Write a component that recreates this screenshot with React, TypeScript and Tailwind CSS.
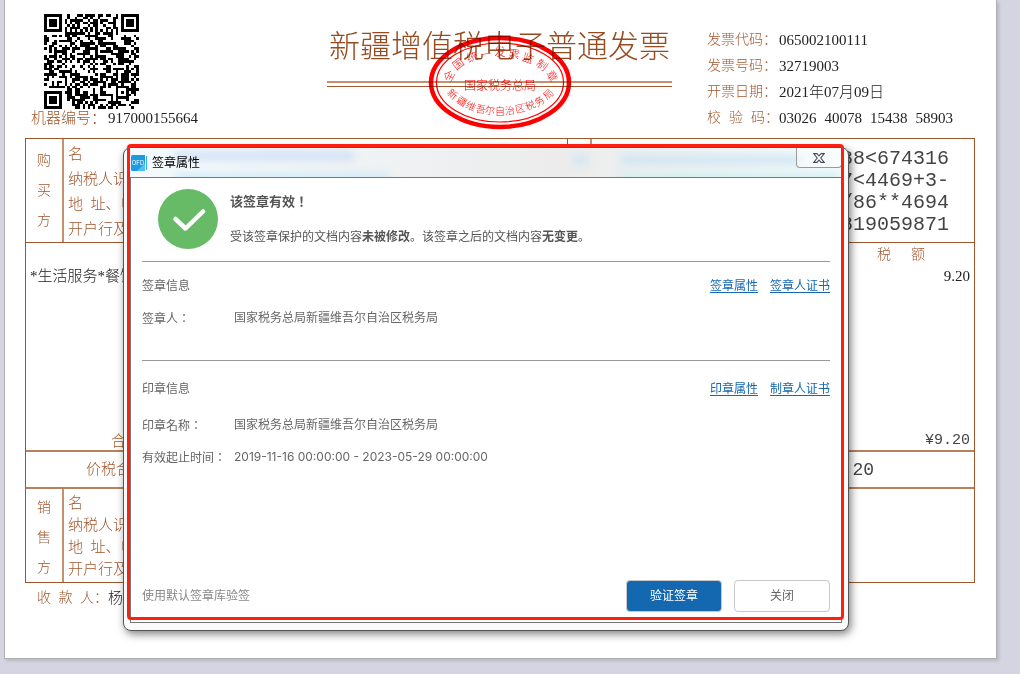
const QR_SIZE = 37;

const topChars = [
  ['全', 449, 76, -62],
  ['国', 458, 64, -38],
  ['统', 472, 57, -22],
  ['一', 486, 54, -10],
  ['发', 500, 52, 0],
  ['票', 514, 54, 8],
  ['监', 528, 58, 20],
  ['制', 542, 65, 36],
  ['章', 552, 76, 60],
] as const;

const bottomChars = [
  ['新', 453, 94, 40],
  ['疆', 462, 101, 32],
  ['维', 471, 106, 24],
  ['吾', 481, 109, 12],
  ['尔', 490, 110, 5],
  ['自', 500, 111, 0],
  ['治', 510, 110, -5],
  ['区', 520, 108, -12],
  ['税', 530, 105, -24],
  ['务', 539, 101, -32],
  ['局', 548, 94, -42],
] as const;

function isDark(x: number, y: number) {
  const finders = [
    [0, 0],
    [QR_SIZE - 7, 0],
    [0, QR_SIZE - 7],
  ];
  for (const [fx, fy] of finders) {
    const dx = x - fx;
    const dy = y - fy;
    if (dx >= -1 && dx <= 7 && dy >= -1 && dy <= 7) {
      const ring = Math.max(Math.abs(dx - 3), Math.abs(dy - 3));
      return ring === 3 || ring <= 1;
    }
  }
  const align = Math.max(Math.abs(x - 30), Math.abs(y - 30));
  if (align <= 2) return align !== 1;
  if (x === 6 || y === 6) return (x + y) % 2 === 0;
  let h = (x * 374761393 + y * 668265263) | 0;
  h = Math.imul(h ^ (h >>> 13), 1274126177);
  return ((h ^ (h >>> 16)) & 255) < 140;
}

function QrCode() {
  let d = '';
  for (let y = 0; y < QR_SIZE; y++) {
    for (let x = 0; x < QR_SIZE; x++) {
      if (isDark(x, y)) d += `M${x} ${y}h1v1h-1z`;
    }
  }
  return (
    <svg className="h-[95px] w-[95px]" viewBox="0 0 37 37" shapeRendering="crispEdges" aria-label="二维码">
      <path d={d} fill="#000" />
    </svg>
  );
}

function Stamp() {
  return (
    <svg
      className="absolute left-1/2 top-[34px] h-[98px] w-[146px] -translate-x-1/2 mix-blend-multiply"
      viewBox="427 34 146 98"
      fill="#ff0000"
      textAnchor="middle"
    >
      <ellipse cx="500" cy="82.5" rx="69" ry="44.5" fill="none" stroke="#ff0000" strokeWidth="4.5" />
      <ellipse cx="500" cy="82.5" rx="63.5" ry="39.5" fill="none" stroke="#ff0000" strokeWidth="1.2" />
      {topChars.map(([c, x, y, r]) => (
        <text key={c} x={x} y={y} dy="4" fontSize="11" transform={`rotate(${r} ${x} ${y})`}>
          {c}
        </text>
      ))}
      <text x="500" y="90" fontSize="12">
        国家税务总局
      </text>
      {bottomChars.map(([c, x, y, r]) => (
        <text key={c} x={x} y={y} dy="4" fontSize="10" transform={`rotate(${r} ${x} ${y})`}>
          {c}
        </text>
      ))}
    </svg>
  );
}

function InfoRow({ label, children }: { label: string[]; children: React.ReactNode }) {
  return (
    <div className="flex h-[26px] items-center">
      <div className="flex w-[72px] justify-between text-sm text-[#a0562c]">
        {label.map((part) => (
          <span key={part}>{part}</span>
        ))}
      </div>
      <div className="flex gap-2 whitespace-nowrap text-[#222]">{children}</div>
    </div>
  );
}

function PartyLines() {
  return (
    <>
      <div>名</div>
      <div>纳税人识</div>
      <div>地&ensp;址、电</div>
      <div>开户行及</div>
    </>
  );
}

function Invoice() {
  return (
    <div className="ml-1 mr-[23px] border border-t-0 border-[#b0b0b0] bg-white pb-[45px] pl-5 pr-[21px] font-['Liberation_Serif','Noto_Sans_CJK_SC',serif] text-[15px] font-light shadow-[2px_2px_3px_#b8b8c4]">
      <header className="flex h-[138px]">
        <div className="w-[302px] pl-[6px] pt-[14px]">
          <div className="ml-[13px] h-[92px]">
            <QrCode />
          </div>
          <div className="flex h-6 items-center">
            <span className="w-[77px] text-[#a0562c]">机器编号：</span>
            <span className="text-[#222]">917000155664</span>
          </div>
        </div>
        <div className="relative flex-1">
          <h1 className="pt-[27px] text-center text-[31px] leading-10 whitespace-nowrap text-[#964a1e]">
            新疆增值税电子普通发票
          </h1>
          <div className="mt-[14px] h-[6px] border-b border-t-2 border-b-[#a0562c] border-t-[#c4906f]" />
          <Stamp />
        </div>
        <div className="w-[303px] pl-[35px] pt-[27px]">
          <InfoRow label={['发票代码：']}>065002100111</InfoRow>
          <InfoRow label={['发票号码：']}>32719003</InfoRow>
          <InfoRow label={['开票日期：']}>2021年07月09日</InfoRow>
          <InfoRow label={['校', '验', '码：']}>
            <span>03026</span>
            <span>40078</span>
            <span>15438</span>
            <span>58903</span>
          </InfoRow>
        </div>
      </header>

      <main className="border border-[#a0562c] text-[#a0562c]">
        <section className="flex h-[103px]">
          <div className="flex w-[38px] flex-col items-center justify-center border-r-2 border-[#c4906f] text-sm leading-[30px]">
            <span>购</span>
            <span>买</span>
            <span>方</span>
          </div>
          <div className="flex-1 pl-1 pt-[3px] leading-[25px]">
            <PartyLines />
          </div>
          <div className="w-[25px] border-l border-r-2 border-l-[#a0562c] border-r-[#c4906f]" />
          <div className="w-[382px] pr-[25px] pt-[9px] text-right font-['Liberation_Mono',monospace] text-xl leading-[22px] text-[#444]">
            <div>88&lt;674316</div>
            <div>7&lt;4469+3-</div>
            <div>/86**4694</div>
            <div>819059871</div>
          </div>
        </section>

        <section className="flex h-[208px] flex-col border-t border-[#a0562c] px-1">
          <div className="flex h-6 items-center justify-end gap-5 pr-[45px] text-sm">
            <span>税</span>
            <span>额</span>
          </div>
          <div className="flex h-[18px] items-center justify-between text-[#222]">
            <span>*生活服务*餐饮</span>
            <span>9.20</span>
          </div>
          <div className="mt-auto flex h-[18px] items-center justify-between pl-[81px] leading-[18px]">
            <span>合</span>
            <span className="font-['Liberation_Mono',monospace] text-[#444]">¥9.20</span>
          </div>
        </section>

        <section className="flex h-[37px] items-center justify-between border-t-2 border-[#b9805c] pl-[60px] pr-[100px]">
          <span>价税合</span>
          <span className="font-['Liberation_Mono',monospace] text-lg text-[#444]">20</span>
        </section>

        <section className="flex h-[95px] border-t-2 border-[#b9805c]">
          <div className="flex w-[38px] flex-col items-center border-r-2 border-[#c4906f] pt-1 text-sm leading-[30px]">
            <span>销</span>
            <span>售</span>
            <span>方</span>
          </div>
          <div className="flex-1 pl-1 pt-[3px] leading-[22px]">
            <PartyLines />
          </div>
        </section>
      </main>

      <footer className="flex h-[30px] items-center pl-3">
        <div className="flex w-[71px] justify-between text-sm text-[#a0562c]">
          <span>收</span>
          <span>款</span>
          <span>人：</span>
        </div>
        <span className="text-[#222]">杨</span>
      </footer>
    </div>
  );
}

function OfdIcon() {
  return (
    <svg className="h-4 w-4 shrink-0" viewBox="0 0 16 16">
      <path d="M0 1.5Q0 0 1.5 0H14v16H1.5Q0 16 0 14.5z" fill="#1e9be0" />
      <path d="M14 8v8H6z" fill="#4cc3ee" />
      <path d="M15.5 1v14" stroke="#35b5e8" />
      <text x="7" y="10" fontSize="6" fill="#fff" textAnchor="middle">
        OFD
      </text>
    </svg>
  );
}

function Field({ label, value }: { label: string; value: string }) {
  return (
    <div className="flex h-8 items-center">
      <span className="w-[92px] font-['Noto_Sans_CJK_TC',sans-serif]">{label}</span>
      <span>{value}</span>
    </div>
  );
}

function SectionHead({ title, links }: { title: string; links: string[] }) {
  return (
    <div className="flex h-8 items-center justify-between">
      <h3>{title}</h3>
      <div className="flex gap-3">
        {links.map((link) => (
          <a key={link} href="#" className="text-[#1468b0] underline underline-offset-2">
            {link}
          </a>
        ))}
      </div>
    </div>
  );
}

function SignatureDialog() {
  return (
    <div
      role="dialog"
      aria-label="签章属性"
      className="absolute left-[123px] right-[171px] top-[147px] rounded-lg border border-[#555] bg-[#fafafa] px-[6px] pb-[7px] font-['Inter','Noto_Sans_CJK_SC',sans-serif] text-xs text-[#666] shadow-[2px_3px_9px_rgba(0,0,0,0.5)]"
    >
      <div className="relative flex h-[29px] items-center gap-[5px] overflow-hidden bg-linear-to-r from-[#f4fafd] via-[#ececec] via-60% to-[#f4fafb] pl-px">
        <div className="absolute left-11 top-1 h-2 w-[180px] bg-[#cfe0f6] blur-[4px]" />
        <div className="absolute left-11 top-[26px] h-2 w-[215px] bg-[#cdeafa] blur-[4px]" />
        <div className="absolute left-[443px] top-2 h-2 w-4 bg-[#cfe4f3] blur-[4px]" />
        <div className="absolute left-[490px] top-2 h-2 w-[180px] bg-[#cbe4f3] blur-[4px]" />
        <div className="absolute left-[490px] top-[26px] h-2 w-[220px] bg-[#cbeef2] blur-[4px]" />
        <div className="relative">
          <OfdIcon />
        </div>
        <h2 className="relative text-black">签章属性</h2>
        <button
          aria-label="关闭窗口"
          className="relative mb-auto ml-auto flex h-5 w-[46px] items-center justify-center rounded-b border border-t-0 border-[#999] bg-white/40"
        >
          <svg className="h-[10px] w-3" viewBox="0 0 12 10">
            <path
              d="M.7 .6H4L6 3 8 .6h3.300L7.800 5l3.500 4.400H8L6 7 4 9.400H.7L4.200 5z"
              fill="#fff"
              stroke="#444a5c"
              strokeWidth="1.100"
            />
          </svg>
        </button>
      </div>

      <div className="border border-[#777] bg-white px-[11px] pb-[10px] pt-[11px]">
        <div className="flex h-[73px] gap-3 border-b border-[#999] pl-4">
          <svg className="h-[60px] w-[60px]" viewBox="0 0 60 60">
            <circle cx="30" cy="30" r="30" fill="#67bb66" />
            <path
              d="M17.500 30L27.500 39.500 45 22.500"
              fill="none"
              stroke="#fff"
              strokeWidth="4.500"
              strokeLinecap="round"
              strokeLinejoin="round"
            />
          </svg>
          <div className="pt-[2px] text-[#555]">
            <p className="font-['Noto_Sans_CJK_TC',sans-serif] text-[13px] leading-5 font-bold">该签章有效！</p>
            <p className="mt-4 leading-5 whitespace-nowrap">
              受该签章保护的文档内容<b>未被修改</b>。该签章之后的文档内容<b>无变更</b>。
            </p>
          </div>
        </div>

        <div className="h-[99px] border-b border-[#999] pt-2">
          <SectionHead title="签章信息" links={['签章属性', '签章人证书']} />
          <Field label="签章人：" value="国家税务总局新疆维吾尔自治区税务局" />
        </div>

        <div className="h-[219px] pt-3">
          <SectionHead title="印章信息" links={['印章属性', '制章人证书']} />
          <div className="pt-1">
            <Field label="印章名称：" value="国家税务总局新疆维吾尔自治区税务局" />
            <Field label="有效起止时间：" value="2019-11-16 00:00:00 - 2023-05-29 00:00:00" />
          </div>
        </div>

        <div className="flex items-center gap-3">
          <span className="mr-auto text-[#888]">使用默认签章库验签</span>
          <button className="h-8 w-24 rounded border border-[#c8c8c8] bg-[#1468b0] text-white">验证签章</button>
          <button className="h-8 w-24 rounded border border-[#c8c8c8] bg-white">关闭</button>
        </div>
      </div>

      <div className="pointer-events-none absolute -top-1 bottom-[10px] left-[3px] right-1 rounded border-[3px] border-[#ff1f10]" />
    </div>
  );
}

export default function App() {
  return (
    <div className="relative min-h-screen overflow-hidden bg-[#d5d5e1]">
      <Invoice />
      <SignatureDialog />
    </div>
  );
}
